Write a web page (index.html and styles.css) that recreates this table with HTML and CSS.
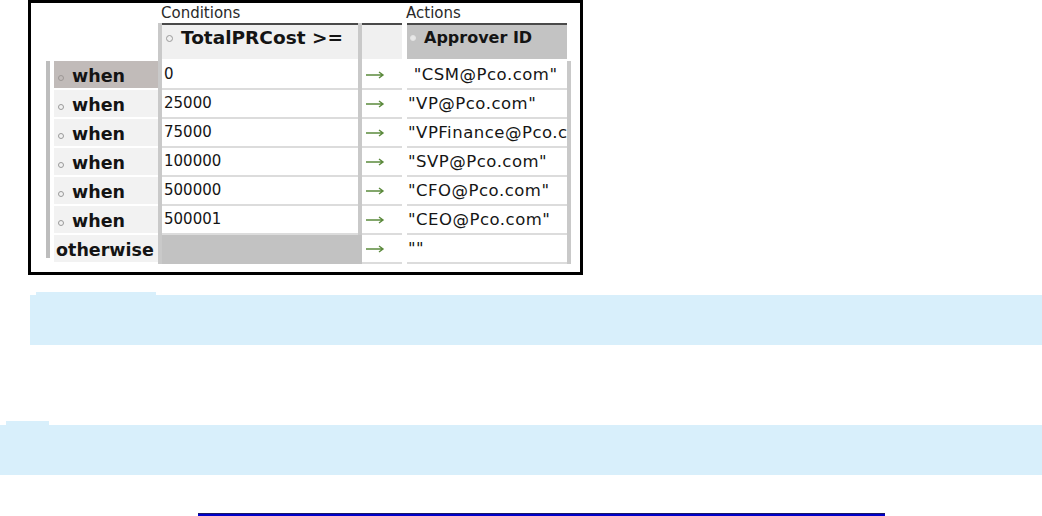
FILE: index.html
```html
<!DOCTYPE html>
<html>
<head>
<meta charset="utf-8">
<link rel="stylesheet" href="styles.css">
</head>
<body>
<div class="frame">
  <div class="table">
    <div class="lbl lbl-cond">Conditions</div>
    <div class="lbl lbl-act">Actions</div>

    <div class="vsep vsep-left"></div>
    <div class="vsep vsep-mid"></div>
    <div class="vsep vsep-right"></div>
    <div class="leftbar"></div>

    <div class="hd hd-cond"><span class="dot"></span><span>TotalPRCost &gt;=</span></div>
    <div class="hd hd-arrow"></div>
    <div class="hd hd-act"><span class="dot dot-light"></span><span>Approver ID</span></div>

    <div class="rh sel r1"><span class="dot"></span>when</div>
    <div class="cv r1">0</div>
    <div class="ar r1"><svg width="20" height="8" viewBox="0 0 20 8"><path d="M1 4H18M14 1L18 4L14 7" fill="none" stroke="#5b8a3c" stroke-width="1.4"/></svg></div>
    <div class="av r1">&nbsp;"CSM@Pco.com"</div>

    <div class="rh r2"><span class="dot"></span>when</div>
    <div class="cv r2">25000</div>
    <div class="ar r2"><svg width="20" height="8" viewBox="0 0 20 8"><path d="M1 4H18M14 1L18 4L14 7" fill="none" stroke="#5b8a3c" stroke-width="1.4"/></svg></div>
    <div class="av r2">"VP@Pco.com"</div>

    <div class="rh r3"><span class="dot"></span>when</div>
    <div class="cv r3">75000</div>
    <div class="ar r3"><svg width="20" height="8" viewBox="0 0 20 8"><path d="M1 4H18M14 1L18 4L14 7" fill="none" stroke="#5b8a3c" stroke-width="1.4"/></svg></div>
    <div class="av r3">"VPFinance@Pco.com"</div>

    <div class="rh r4"><span class="dot"></span>when</div>
    <div class="cv r4">100000</div>
    <div class="ar r4"><svg width="20" height="8" viewBox="0 0 20 8"><path d="M1 4H18M14 1L18 4L14 7" fill="none" stroke="#5b8a3c" stroke-width="1.4"/></svg></div>
    <div class="av r4">"SVP@Pco.com"</div>

    <div class="rh r5"><span class="dot"></span>when</div>
    <div class="cv r5">500000</div>
    <div class="ar r5"><svg width="20" height="8" viewBox="0 0 20 8"><path d="M1 4H18M14 1L18 4L14 7" fill="none" stroke="#5b8a3c" stroke-width="1.4"/></svg></div>
    <div class="av r5">"CFO@Pco.com"</div>

    <div class="rh r6"><span class="dot"></span>when</div>
    <div class="cv r6">500001</div>
    <div class="ar r6"><svg width="20" height="8" viewBox="0 0 20 8"><path d="M1 4H18M14 1L18 4L14 7" fill="none" stroke="#5b8a3c" stroke-width="1.4"/></svg></div>
    <div class="av r6">"CEO@Pco.com"</div>

    <div class="rh rh-other r7">otherwise</div>
    <div class="cv cv-other r7"></div>
    <div class="ar r7"><svg width="20" height="8" viewBox="0 0 20 8"><path d="M1 4H18M14 1L18 4L14 7" fill="none" stroke="#5b8a3c" stroke-width="1.4"/></svg></div>
    <div class="av r7">""</div>
  </div>
</div>

<div class="note note-one">
  <div class="tab tab-one"></div>
  <div class="band"></div>
</div>

<div class="note note-two">
  <div class="tab tab-two"></div>
  <div class="band"></div>
</div>

<div class="rule"></div>
</body>
</html>
```

FILE: styles.css
```css
html, body {
  margin: 0;
  padding: 0;
  background: #fff;
  font-family: "DejaVu Sans", Verdana, sans-serif;
  overflow: hidden;
}

.frame {
  box-sizing: border-box;
  width: 555px;
  height: 275px;
  margin-left: 28px;
  border: 3px solid #000;
  background: #fff;
}

.table {
  display: grid;
  grid-template-columns: 15px 4px 4px 104px 4px 196px 4px 40px 5px 160px 4px;
  grid-template-rows: 20px 36px 2px repeat(7, 29px);
}

.r1 { grid-row: 4; }
.r2 { grid-row: 5; }
.r3 { grid-row: 6; }
.r4 { grid-row: 7; }
.r5 { grid-row: 8; }
.r6 { grid-row: 9; }
.r7 { grid-row: 10; }

.lbl {
  grid-row: 1;
  font-size: 15px;
  color: #2a2a2a;
  line-height: 20px;
  white-space: nowrap;
}
.lbl-cond { grid-column: 6; margin-left: -1px; }
.lbl-act { grid-column: 10; margin-left: -1px; }

.vsep { background: #c9c9c9; }
.vsep-left { grid-column: 5; grid-row: 2 / 11; }
.vsep-mid { grid-column: 7; grid-row: 2 / 11; }
.vsep-right { grid-column: 11; grid-row: 4 / 11; }
.leftbar { grid-column: 2; grid-row: 4 / 11; background: #bdbdbd; margin-bottom: 6px; }

.hd {
  grid-row: 2;
  border-top: 2px solid #4a4a4a;
  background: #f0f0f0;
  display: flex;
  align-items: center;
  font-weight: bold;
  color: #141414;
  white-space: nowrap;
  overflow: hidden;
  padding-bottom: 10px;
}
.hd-cond { grid-column: 6; font-size: 18.5px; padding-left: 4px; }
.hd-arrow { grid-column: 8; }
.hd-act { grid-column: 10; background: #c3c3c3; font-size: 16px; padding-left: 3px; }

.dot {
  display: inline-block;
  width: 5px;
  height: 5px;
  border: 1px solid #9a9a9a;
  border-radius: 50%;
  margin-right: 7px;
  flex: none;
}
.hd .dot { margin-right: 8px; margin-top: 2px; }
.dot-light { border-color: #e4e4e4; background: #e8e8e8; width: 4px; height: 4px; }

.rh, .cv, .ar, .av {
  border-bottom: 2px solid #dcdcdc;
  display: flex;
  align-items: center;
  white-space: nowrap;
  overflow: hidden;
}

.rh {
  grid-column: 4;
  background: #f2f2f2;
  font-weight: bold;
  font-size: 17.5px;
  color: #141414;
  padding-left: 4px;
  padding-top: 2px;
  box-sizing: border-box;
  border-bottom-color: #fff;
}
.rh .dot { width: 4px; height: 4px; margin-right: 8px; margin-top: 5px; }
.rh.sel { background: #c1bbb9; }
.rh.sel .dot { border-color: #9d9896; }
.rh-other { padding-left: 2px; }

.cv {
  grid-column: 6;
  font-size: 15px;
  color: #151515;
  padding-left: 2px;
  padding-bottom: 1px;
  box-sizing: border-box;
}
.cv-other { background: #c2c2c2; border-bottom-color: #c2c2c2; margin-right: -4px; }

.ar {
  grid-column: 8;
  padding-left: 3px;
  box-sizing: border-box;
}

.av {
  grid-column: 10;
  font-size: 16.5px;
  letter-spacing: 0.5px;
  color: #151515;
  padding-left: 1px;
  box-sizing: border-box;
}

.note { display: flex; flex-direction: column; }
.note-one { margin-left: 30px; margin-top: 17px; }
.note-two { margin-top: 76px; }

.tab { height: 4px; background: #d8effb; }
.tab-one { width: 120px; margin-left: 6px; height: 3px; }
.tab-two { width: 43px; margin-left: 6px; }

.band { height: 50px; background: #d8effb; }

.rule {
  margin-top: 38px;
  margin-left: 198px;
  width: 687px;
  height: 2px;
  background: #0000c8;
  border-top: 1px solid #1a1a66;
}
```
